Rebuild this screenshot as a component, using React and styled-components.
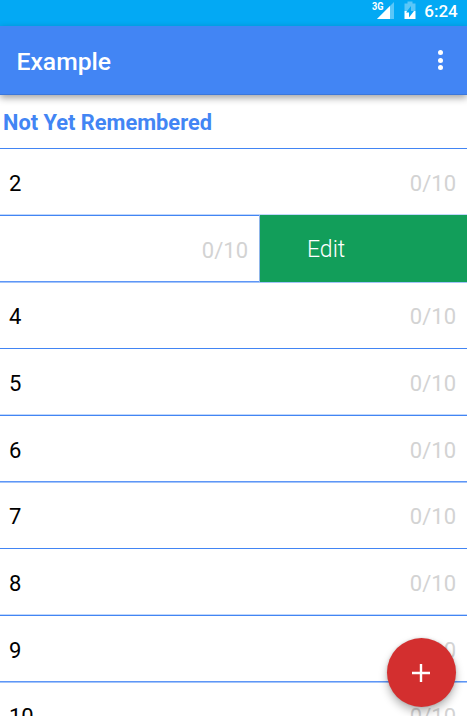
import React from "react";
import styled, { createGlobalStyle, css } from "styled-components";

const blue = "#4285f4";

const GlobalStyle = createGlobalStyle`
  * { box-sizing: border-box; }
  html, body { margin: 0; background: #fff; overflow: hidden; }
`;

const Screen = styled.div`
  position: relative;
  display: flex;
  flex-direction: column;
  width: 467px;
  height: 716px;
  overflow: hidden;
  background: #fff;
  font-family: Roboto, "Noto Sans", sans-serif;
`;

const StatusBar = styled.div`
  flex: none;
  display: flex;
  justify-content: flex-end;
  height: 26px;
  padding-right: 7px;
  background: #03a9f4;
  color: #fff;
`;

const StatusIcons = styled.svg`
  display: block;
  width: 50px;
  height: 24px;
`;

const NetworkLabel = styled.text`
  font: 700 10px Roboto, sans-serif;
  fill: #fff;
`;

const Clock = styled.span`
  width: 40px;
  padding-left: 2px;
  text-align: center;
  font-size: 17px;
  font-weight: 500;
  line-height: 23px;
  white-space: nowrap;
`;

const AppBar = styled.header`
  position: relative;
  z-index: 1;
  flex: none;
  display: flex;
  align-items: center;
  justify-content: space-between;
  height: 69px;
  padding: 2px 24px 0 16.5px;
  background: ${blue};
  box-shadow: 0 3px 7px rgba(0, 0, 0, 0.36), inset 0 -1px 0 rgba(0, 0, 0, 0.1);
`;

const Title = styled.h1`
  margin: 0;
  color: #fff;
  font-size: 24.7px;
  font-weight: 500;
  line-height: 30px;
`;

const MenuButton = styled.button`
  display: flex;
  flex-direction: column;
  gap: 2.4px;
  padding: 0;
  margin-bottom: 3px;
  border: 0;
  background: none;
`;

const Dot = styled.span`
  width: 5px;
  height: 5px;
  border-radius: 50%;
  background: #fff;
`;

const SectionHeader = styled.h2`
  flex: none;
  height: 53px;
  margin: 0;
  padding-left: 3px;
  color: ${blue};
  font-size: 21.8px;
  font-weight: 700;
  line-height: 55px;
`;

const List = styled.div`
  flex: 1;
  min-height: 0;
`;

const dividers = {
  crisp: css`
    height: 66px;
    background: linear-gradient(${blue} 0 1px, transparent 1px);
    padding-top: 21px;
  `,
  late: css`
    height: 67px;
    background: linear-gradient(#c0d7fb 0 1px, ${blue} 1px 2px, transparent 2px);
    padding-top: 22px;
  `,
  early: css`
    height: 67px;
    background: linear-gradient(#5e96f6 0 1px, #a3c4fa 1px 2px, transparent 2px);
    padding-top: 21px;
  `,
};

const Row = styled.div`
  display: flex;
  justify-content: space-between;
  padding: 0 11px 0 9px;
  font-size: 22px;
  line-height: 30px;
  ${(p) => dividers[p.$divider]}
`;

const Name = styled.span`
  color: #000;
`;

const Score = styled.span`
  color: #d3d3d3;
`;

const SwipedRow = styled.div`
  display: flex;
  height: 67px;
  background: linear-gradient(#c0d7fb 0 1px, ${blue} 1px 2px, transparent 2px);
`;

const SwipedContent = styled.div`
  width: 259px;
  padding: 22px 11px 0 0;
  text-align: right;
  font-size: 22px;
  line-height: 30px;
`;

const EditAction = styled.button`
  position: relative;
  flex: 1;
  height: 67px;
  margin: 1px 0 -1px;
  padding: 2px 0 0 47px;
  border: 0;
  border-left: 1px solid #8fb5e8;
  background: #129e5a;
  color: #fff;
  font-family: inherit;
  font-size: 23px;
  font-weight: 300;
  line-height: 65px;
  text-align: left;
`;

const AddButton = styled.button`
  position: absolute;
  left: 387px;
  top: 638px;
  display: flex;
  align-items: center;
  justify-content: center;
  width: 69px;
  height: 69px;
  padding: 0 1px 0 0;
  border: 0;
  border-radius: 50%;
  background: #d32f2f;
  box-shadow: 0 5px 9px rgba(0, 0, 0, 0.28), 0 0 3px rgba(0, 0, 0, 0.15);
`;

const cycle = ["crisp", "late", "early"];
const items = [2, 3, 4, 5, 6, 7, 8, 9, 10];

export default function App() {
  return (
    <Screen>
      <GlobalStyle />
      <StatusBar>
        <StatusIcons viewBox="0 0 50 24">
          <NetworkLabel x="2" y="10" textLength="11.500" lengthAdjust="spacingAndGlyphs">3G</NetworkLabel>
          <path d="M24 2V19H7Z" fill="#fff" fillOpacity=".35" />
          <path d="M20 6V19H7Z" fill="#fff" />
          <path d="M37.500 1.500h5v2h3V11H34.500V3.500h3Z" fill="#fff" fillOpacity=".35" />
          <path d="M34.500 11h11v8h-11Z" fill="#fff" />
          <path d="M41 6v5h3L39 17.500v-5h-3Z" fill="#03a9f4" />
        </StatusIcons>
        <Clock>6:24</Clock>
      </StatusBar>
      <AppBar>
        <Title>Example</Title>
        <MenuButton aria-label="More options">
          <Dot />
          <Dot />
          <Dot />
        </MenuButton>
      </AppBar>
      <SectionHeader>Not Yet Remembered</SectionHeader>
      <List>
        {items.map((n, i) =>
          n === 3 ? (
            <SwipedRow key={n}>
              <SwipedContent>
                <Score>0/10</Score>
              </SwipedContent>
              <EditAction>Edit</EditAction>
            </SwipedRow>
          ) : (
            <Row key={n} $divider={cycle[i % 3]}>
              <Name>{n}</Name>
              <Score>0/10</Score>
            </Row>
          )
        )}
      </List>
      <AddButton aria-label="Add">
        <svg width="18" height="18" viewBox="0 0 18 18">
          <path d="M9 0V18M0 9H18" stroke="#fff" strokeWidth="2.4" />
        </svg>
      </AddButton>
    </Screen>
  );
}
